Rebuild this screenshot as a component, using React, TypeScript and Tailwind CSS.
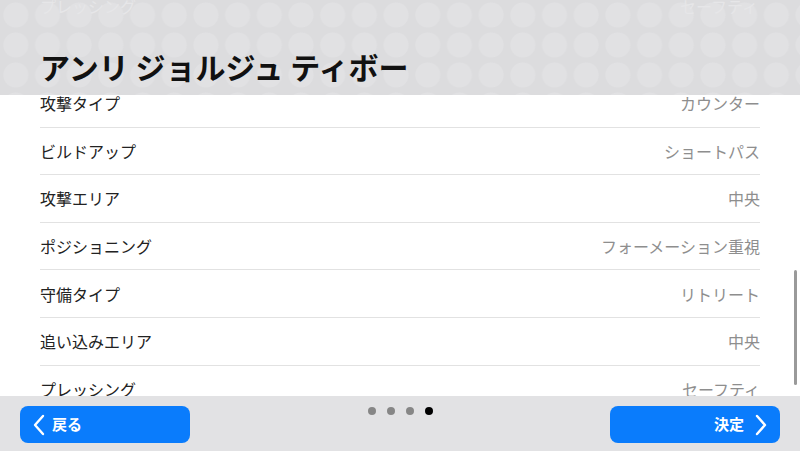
const rows: [string, string][] = [
  ["攻撃タイプ", "カウンター"],
  ["ビルドアップ", "ショートパス"],
  ["攻撃エリア", "中央"],
  ["ポジショニング", "フォーメーション重視"],
  ["守備タイプ", "リトリート"],
  ["追い込みエリア", "中央"],
  ["プレッシング", "セーフティ"],
];

function Chevron({ dir }: { dir: "left" | "right" }) {
  return (
    <svg width="14" height="22" viewBox="0 0 14 22" fill="none">
      <polyline
        points={dir === "left" ? "11,2 3,11 11,20" : "3,2 11,11 3,20"}
        stroke="white"
        strokeWidth="2.4"
        strokeLinecap="round"
        strokeLinejoin="round"
      />
    </svg>
  );
}

export default function App() {
  return (
    <div
      className="relative w-[800px] h-[451px] overflow-hidden bg-white flex flex-col"
      style={{ fontFamily: '"Noto Sans CJK JP", "Noto Sans", sans-serif' }}
    >
      {/* list, scrolled so the first row sits under the header */}
      <div className="flex-1 overflow-hidden">
        <div className="pt-[80px] px-[40px]">
          {rows.map(([label, value]) => (
            <div
              key={label}
              className="h-[47.6px] flex items-center justify-between border-b border-[#e2e2e2] text-[16px]"
            >
              <span className="text-[#222]">{label}</span>
              <span className="text-[#8e8e8e]">{value}</span>
            </div>
          ))}
        </div>
      </div>

      {/* header over the list */}
      <div className="absolute top-0 left-0 w-full h-[95px] bg-[#dcdcde] bg-[radial-gradient(circle,#e1e1e3_12px,transparent_13px)] bg-[length:31.7px_30px] bg-[position:0px_0px]">
        <div className="absolute top-[-6px] left-[40px] text-[16px] text-[#e6e6e8]">プレッシング</div>
        <div className="absolute top-[-6px] right-[42px] text-[16px] text-[#e6e6e8]">セーフティ</div>
        <div className="absolute left-[40px] top-[46px] text-[30px] font-bold leading-[40px] text-[#111]">
          アンリ ジョルジュ ティボー
        </div>
      </div>

      {/* scrollbar */}
      <div className="absolute left-[794px] top-[270px] w-[3px] h-[115px] rounded-full bg-[#9a9a9a]" />

      {/* footer */}
      <div className="relative h-[55px] bg-[#e2e2e4] flex items-start justify-between px-[20px] pt-[10px]">
        <button className="w-[170px] h-[37px] rounded-lg bg-[#0a7cfc] flex items-center gap-[6px] pl-[12px] text-white text-[15px] font-bold">
          <Chevron dir="left" />
          <span>戻る</span>
        </button>
        <div className="flex gap-[11px] pt-[1px]">
          <span className="w-[8px] h-[8px] rounded-full bg-[#868686]" />
          <span className="w-[8px] h-[8px] rounded-full bg-[#868686]" />
          <span className="w-[8px] h-[8px] rounded-full bg-[#868686]" />
          <span className="w-[8px] h-[8px] rounded-full bg-black" />
        </div>
        <button className="w-[170px] h-[37px] rounded-lg bg-[#0a7cfc] flex items-center justify-end gap-[10px] pr-[12px] text-white text-[15px] font-bold">
          <span>決定</span>
          <Chevron dir="right" />
        </button>
      </div>
    </div>
  );
}
